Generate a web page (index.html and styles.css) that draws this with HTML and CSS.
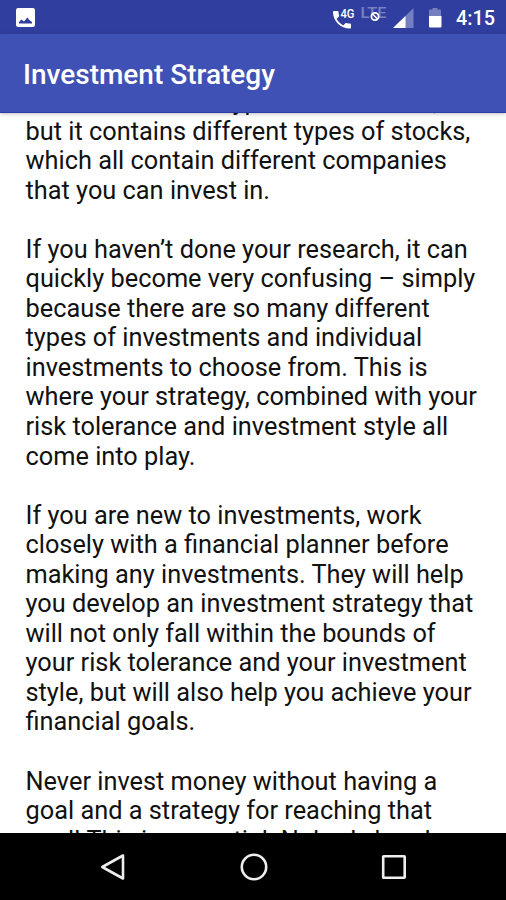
FILE: index.html
```
<!DOCTYPE html>
<html lang="en">
<head>
    <meta charset="UTF-8">
    <meta name="viewport" content="width=device-width, initial-scale=1.0">
    <title>Investment Strategy</title>
    <link rel="stylesheet" href="styles.css">
</head>
<body>
    <div class="screen">
        <div class="status-bar">
            <svg class="icon-image" width="19" height="19" viewBox="0 0 19 19">
                <rect width="19" height="19" rx="2.2" fill="#fff"/>
                <path d="M3 15.500v-1.500l2.500-2.500 2 1.700 1-.2 2.800-3.500 2 2.500 2.700 2v1.500z" fill="#303f9f"/>
            </svg>
            <div class="status-icons">
                <svg width="164" height="34" viewBox="0 0 164 34">
                    <!-- call -->
                    <path transform="translate(-2 8)" d="M6.600 10.800c1.400 2.800 3.800 5.100 6.600 6.600l2.200-2.200c.3-.3.7-.4 1-.2 1.100.4 2.300.6 3.600.6.6 0 1 .4 1 1V19.500c0 .6-.4 1-1 1C10.600 20.500 3 13.400 3 4c0-.6.4-1 1-1h3.500c.6 0 1 .4 1 1 0 1.300.2 2.500.6 3.600.1.3 0 .7-.2 1z" fill="#fff"/>
                    <text class="label-4g" x="8.500" y="17.800" textLength="14" lengthAdjust="spacingAndGlyphs">4G</text>
                    <text class="label-lte" x="28.500" y="18.300" textLength="26" lengthAdjust="spacingAndGlyphs">LTE</text>
                    <circle cx="43" cy="16.500" r="3.600" fill="#303f9f" stroke="#fff" stroke-width="1.800"/>
                    <path d="M40.800 14.300l4.400 4.400" stroke="#fff" stroke-width="1.500"/>
                    <!-- signal -->
                    <path d="M81.500 8v20H61z" fill="#747fbf"/>
                    <path d="M73.500 16v12H61z" fill="#fff"/>
                    <!-- battery -->
                    <path d="M97 16v-5.500q0-1 1-1h2.500V8h5v1.500h2.500q1 0 1 1V16z" fill="#747fbf"/>
                    <path d="M97 16h12.500v10.500q0 1-1 1H98q-1 0-1-1z" fill="#fff"/>
                </svg>
                <span class="clock">4:15</span>
            </div>
        </div>

        <header class="toolbar">
            <h1>Investment Strategy</h1>
        </header>

        <main class="content">
            <div class="article">
                <p>stock market is a type of investment,<br>
                but it contains different types of stocks,<br>
                which all contain different companies<br>
                that you can invest in.</p>

                <p>If you haven’t done your research, it can<br>
                quickly become very confusing – simply<br>
                because there are so many different<br>
                types of investments and individual<br>
                investments to choose from. This is<br>
                where your strategy, combined with your<br>
                risk tolerance and investment style all<br>
                come into play.</p>

                <p>If you are new to investments, work<br>
                closely with a financial planner before<br>
                making any investments. They will help<br>
                you develop an investment strategy that<br>
                will not only fall within the bounds of<br>
                your risk tolerance and your investment<br>
                style, but will also help you achieve your<br>
                financial goals.</p>

                <p>Never invest money without having a<br>
                goal and a strategy for reaching that<br>
                goal! This is essential. Nobody hands</p>
            </div>
        </main>

        <nav class="nav-bar">
            <svg width="28" height="28" viewBox="0 0 28 28">
                <path d="M24 2.500v23L3.300 14z"/>
            </svg>
            <svg width="28" height="28" viewBox="0 0 28 28">
                <circle cx="14" cy="14" r="12.200"/>
            </svg>
            <svg width="28" height="28" viewBox="0 0 28 28">
                <rect x="3.200" y="3.200" width="21.500" height="21.500" rx=".5"/>
            </svg>
        </nav>
    </div>
</body>
</html>
```
FILE: styles.css
```
:root {
    --primary: #3f51b5;
    --primary-dark: #303f9f;
}

* {
    box-sizing: border-box;
}

body {
    margin: 0;
    font-family: Roboto, sans-serif;
    background-color: #fff;
    color: #111;
}

.screen {
    display: flex;
    flex-direction: column;
    height: 900px;
    overflow: hidden;
}

.status-bar {
    display: flex;
    justify-content: space-between;
    height: 34px;
    padding-left: 16px;
    background-color: var(--primary-dark);
}

.icon-image {
    margin-top: 8px;
}

.status-icons {
    display: flex;
    width: 174px;
}

.status-icons svg {
    flex: none;
    width: 164px;
    margin-right: -40px;
}

.label-4g {
    font-size: 13.500px;
    font-weight: 500;
    fill: #fff;
}

.label-lte {
    font-size: 14.500px;
    font-weight: 500;
    fill: #7883c5;
}

.clock {
    color: #fff;
    font-size: 19.800px;
    font-weight: 500;
    line-height: 37px;
    white-space: nowrap;
}

.toolbar {
    position: relative;
    display: flex;
    align-items: center;
    flex: none;
    height: 79px;
    padding: 3px 23px 0;
    background-color: var(--primary);
    border-bottom: 1px solid #2a3da5;
    box-shadow: 0 1px 4px rgba(0, 0, 0, 0.25);
}

h1 {
    margin: 0;
    color: #fff;
    font-size: 28px;
    font-weight: 500;
    line-height: 32px;
}

.content {
    flex: 1;
    min-height: 0;
    overflow: hidden;
}

.article {
    margin-top: -26px;
    padding-left: 25.500px;
    font-size: 25.340px;
    line-height: 29.540px;
    white-space: nowrap;
}

.article p {
    margin: 0 0 29.540px;
}

.nav-bar {
    display: flex;
    align-items: center;
    justify-content: center;
    flex: none;
    gap: 112.500px;
    height: 67px;
    padding-left: 1px;
    background-color: #000;
}

.nav-bar svg {
    fill: none;
    stroke: #eee;
    stroke-width: 2.600;
    stroke-linejoin: round;
}
```
